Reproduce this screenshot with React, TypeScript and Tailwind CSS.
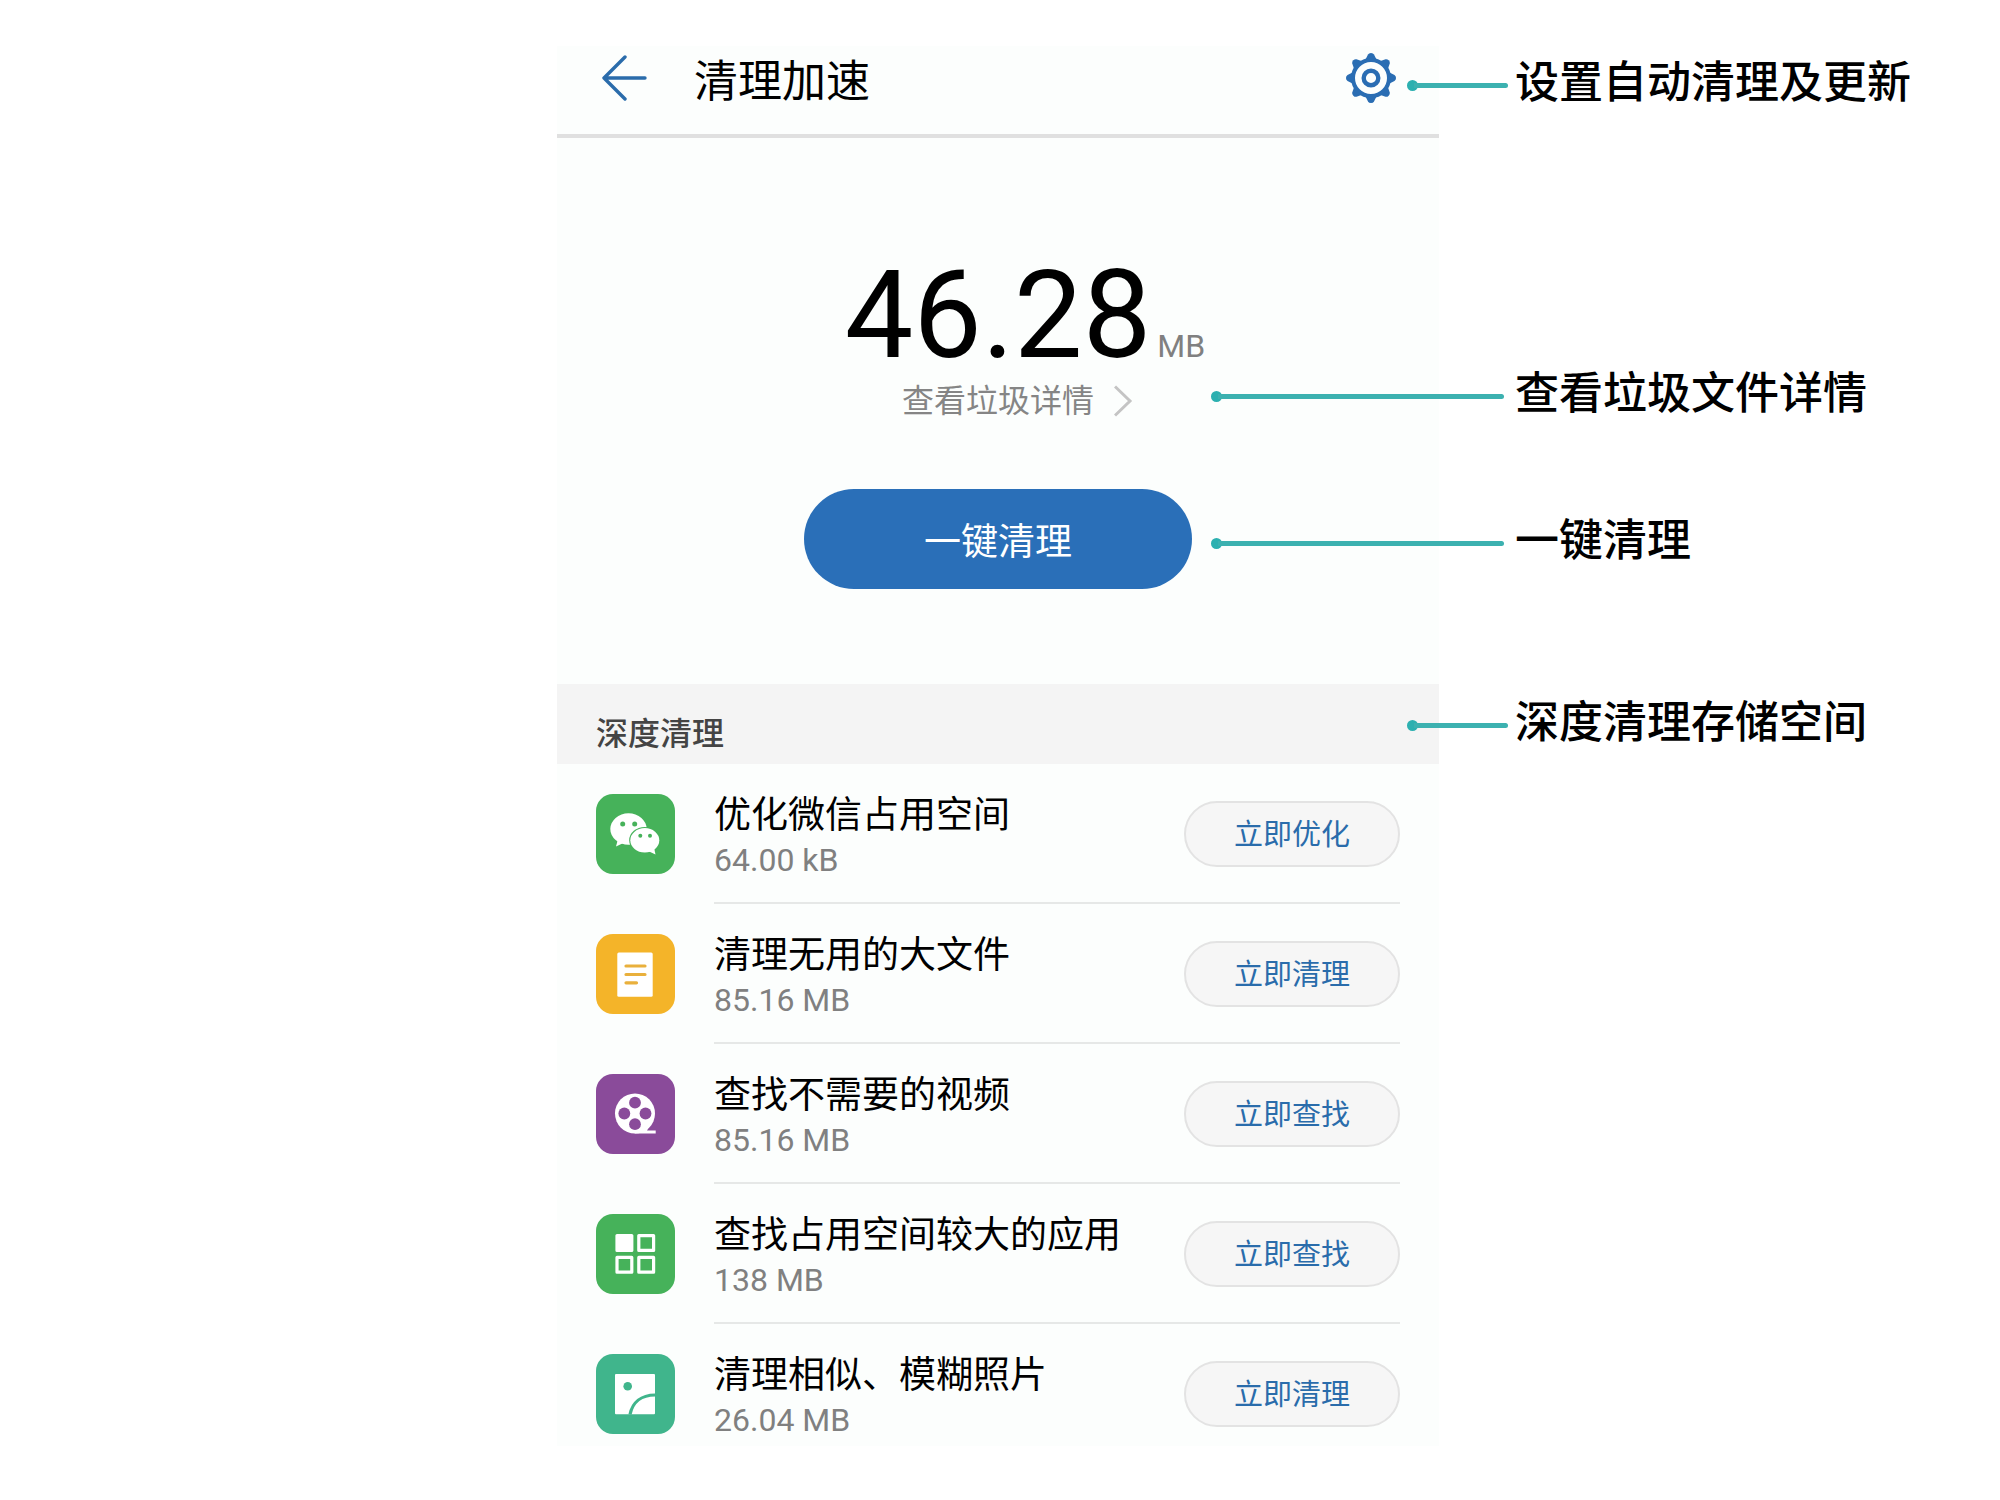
import type { ReactNode } from "react";

type CleanItem = {
  title: string;
  size: string;
  action: string;
  icon: ReactNode;
};

function BackIcon() {
  return (
    <svg viewBox="0 0 46 46" className="size-[46px]" fill="none" stroke="#2a6cab" strokeWidth="3.4" strokeLinecap="round">
      <path d="M43 23H2M23 2 2 23 23 44" strokeLinejoin="round" />
    </svg>
  );
}

function GearIcon() {
  return (
    <svg viewBox="-25 -25 50 50" className="size-[50px]">
      {[0, 45, 90, 135, 180, 225, 270, 315].map((angle) => (
        <path
          key={angle}
          d="M-6-17.500-3-23.500Q-2.200-25 0-25T3-23.500L6-17.500Z"
          fill="#2a6db3"
          transform={`rotate(${angle})`}
        />
      ))}
      <circle r="18" fill="#fcfefd" stroke="#2a6db3" strokeWidth="4" />
      <circle r="7.300" fill="none" stroke="#2a6db3" strokeWidth="4.400" />
    </svg>
  );
}

function ChevronIcon() {
  return (
    <svg viewBox="0 0 20 32" className="h-8 w-5" fill="none" stroke="#c4c4c4" strokeWidth="3">
      <path d="M1 1.500 16 16 1 30.500" />
    </svg>
  );
}

function WechatIcon() {
  return (
    <svg viewBox="0 0 79 80" className="h-20 w-[79px]">
      <rect width="79" height="80" rx="17" fill="#46b25a" />
      <ellipse cx="32.500" cy="35" rx="18.200" ry="15.700" fill="#fff" />
      <path d="M22 45 20 52.500 28.500 48.500Z" fill="#fff" />
      <ellipse cx="48.800" cy="46.300" rx="15.600" ry="13.400" fill="#46b25a" />
      <ellipse cx="48.800" cy="46.300" rx="14.500" ry="12.200" fill="#fff" />
      <path d="M52 57 59.500 60.500 58 53.500Z" fill="#fff" />
      <g fill="#46b25a">
        <circle cx="26.700" cy="30" r="2.500" />
        <circle cx="38.700" cy="30" r="2.500" />
        <circle cx="44.300" cy="41.700" r="2" />
        <circle cx="54" cy="41.700" r="2" />
      </g>
    </svg>
  );
}

function FileIcon() {
  return (
    <svg viewBox="0 0 79 80" className="h-20 w-[79px]">
      <rect width="79" height="80" rx="17" fill="#f4b429" />
      <rect x="21.300" y="18.500" width="35.400" height="44.200" rx="1.500" fill="#fff" />
      <path d="M30 32H49M30 40.500H49M30 48.800H40.500" stroke="#e9b03c" strokeWidth="3.200" strokeLinecap="round" />
    </svg>
  );
}

function VideoIcon() {
  return (
    <svg viewBox="0 0 79 80" className="h-20 w-[79px]">
      <rect width="79" height="80" rx="17" fill="#8a4b9a" />
      <circle cx="39" cy="39.500" r="20" fill="#fff" />
      <path d="M39 59.500H59.700V56.500H51L53 53 44 50 36 57Z" fill="#fff" />
      <g fill="#8a4b9a">
        <circle cx="39" cy="28.700" r="5.900" />
        <circle cx="28.300" cy="39.500" r="5.900" />
        <circle cx="49.500" cy="39.500" r="5.900" />
        <circle cx="39" cy="50.200" r="5.900" />
      </g>
    </svg>
  );
}

function AppsIcon() {
  return (
    <svg viewBox="0 0 79 80" className="h-20 w-[79px]">
      <rect width="79" height="80" rx="17" fill="#46b25a" />
      <g fill="none" stroke="#fff" strokeWidth="3.200" strokeLinejoin="round">
        <rect x="21" y="21.600" width="14.800" height="14.800" fill="#fff" />
        <rect x="42.800" y="21.600" width="14.800" height="14.800" />
        <rect x="21" y="43.400" width="14.800" height="14.800" />
        <rect x="42.800" y="43.400" width="14.800" height="14.800" />
      </g>
    </svg>
  );
}

function PhotoIcon() {
  return (
    <svg viewBox="0 0 79 80" className="h-20 w-[79px]">
      <rect width="79" height="80" rx="17" fill="#40b58c" />
      <rect x="19" y="20" width="40" height="40.300" rx="1" fill="#fff" />
      <circle cx="31.700" cy="32.300" r="4.300" fill="#40b58c" />
      <path d="M34 60.500C36.500 48.500 45 41 59.200 41" fill="none" stroke="#40b58c" strokeWidth="3.200" />
    </svg>
  );
}

// A label outside the phone with a dotted line that points back into it
function Callout({ text, className, line }: { text: string; className: string; line: string }) {
  return (
    <div className={`absolute left-full flex h-11 items-center whitespace-nowrap ${className}`}>
      <span className="mt-2 size-[11px] rounded-full bg-[#2cb0b0]" />
      <span className={`mt-2 -ml-1 h-[5px] rounded-r-full bg-[#3cb1b0] ${line}`} />
      <span className="absolute left-full pt-1 text-[44px] leading-[44px] font-medium text-black">{text}</span>
    </div>
  );
}

const items: CleanItem[] = [
  { title: "优化微信占用空间", size: "64.00 kB", action: "立即优化", icon: <WechatIcon /> },
  { title: "清理无用的大文件", size: "85.16 MB", action: "立即清理", icon: <FileIcon /> },
  { title: "查找不需要的视频", size: "85.16 MB", action: "立即查找", icon: <VideoIcon /> },
  { title: "查找占用空间较大的应用", size: "138 MB", action: "立即查找", icon: <AppsIcon /> },
  { title: "清理相似、模糊照片", size: "26.04 MB", action: "立即清理", icon: <PhotoIcon /> },
];

export default function App() {
  return (
    <div className="grid min-h-screen grid-cols-[557fr_882fr_561fr] bg-white pt-[46px] font-['Roboto','Noto_Sans_CJK_SC',sans-serif]">
      <main className="col-start-2 self-start bg-[#fcfefd]">
        <header className="relative flex h-[92px] items-center border-b-4 border-[#e0e0e0] pr-[43px] pb-6 pl-[45px]">
          <button aria-label="返回">
            <BackIcon />
          </button>
          <h1 className="ml-[46px] flex-1 pt-2 text-[44px] leading-[44px] text-black">清理加速</h1>
          <button aria-label="设置">
            <GearIcon />
          </button>
          <Callout text="设置自动清理及更新" className="top-[13px] -ml-8 w-[108px]" line="w-[94px]" />
        </header>

        <section className="flex h-[546px] flex-col pt-[116px]">
          <p className="grid grid-cols-[1fr_auto_1fr] items-baseline">
            <span className="col-start-2 text-[122px] leading-[124px] text-black">46.28</span>
            <span className="ml-1.5 text-[32px] leading-8 text-[#808080]">MB</span>
          </p>
          <div className="relative mt-[7px]">
            <a href="#details" className="grid grid-cols-[1fr_auto_1fr] text-[32px] leading-8 text-[#858585]">
              <span className="col-start-2">查看垃圾详情</span>
              <span className="ml-5">
                <ChevronIcon />
              </span>
            </a>
            <Callout text="查看垃圾文件详情" className="-top-[15px] -ml-[228px] w-[304px]" line="w-[286px]" />
          </div>
          <div className="relative mt-[72px] flex justify-center">
            <button className="h-[100px] w-[388px] rounded-full bg-[#2a6fb8] pt-2 text-[37px] text-white">
              一键清理
            </button>
            <Callout text="一键清理" className="top-7 -ml-[228px] w-[304px]" line="w-[286px]" />
          </div>
        </section>

        <div className="relative flex h-20 items-center bg-[#f4f4f4] px-[39px] pt-5">
          <h2 className="text-[32px] leading-8 font-medium text-[#444]">深度清理</h2>
          <Callout text="深度清理存储空间" className="top-[15px] -ml-8 w-[108px]" line="w-[94px]" />
        </div>

        <ul>
          {items.map((item) => (
            <li key={item.title} className="group flex gap-[39px] px-[39px] pt-[30px]">
              {item.icon}
              <div className="flex flex-1 items-center justify-between border-b-2 border-[#e6e8e7] pb-7 group-last:border-b-0 group-last:pb-3">
                <div className="h-20">
                  <h3 className="text-[37px] leading-11 text-black">{item.title}</h3>
                  <p className="mt-1 text-[32px] leading-9 text-[#808080]">{item.size}</p>
                </div>
                <button className="h-[66px] w-[216px] rounded-full border-2 border-[#e3e3e3] bg-[#f6f6f6] pt-1 text-[29px] text-[#2a6cab]">
                  {item.action}
                </button>
              </div>
            </li>
          ))}
        </ul>
      </main>
    </div>
  );
}
